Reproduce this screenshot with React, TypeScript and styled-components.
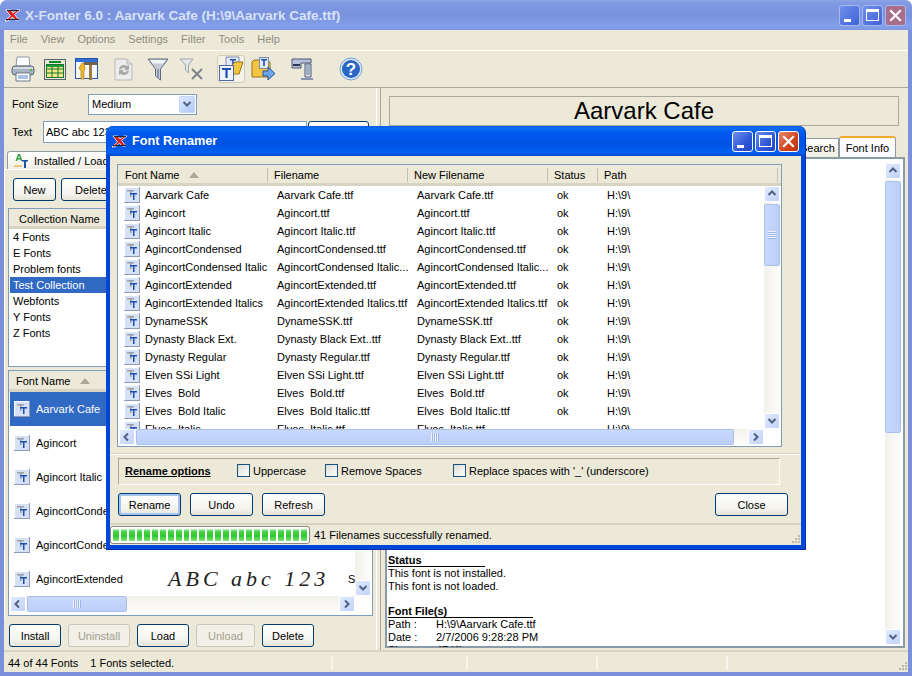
import React from 'react';
import styled, { createGlobalStyle } from 'styled-components';

const GlobalStyle = createGlobalStyle`
  html, body { margin: 0; padding: 0; background: #fff; }
  body { font-family: "Liberation Sans", Arial, sans-serif; font-size: 11px; color: #000; overflow: hidden; }
  * { box-sizing: border-box; }
  svg { flex: none; }
`;

const FILES: [string, string, string?][] = [
  ['Aarvark Cafe', 'Aarvark Cafe.ttf'],
  ['Agincort', 'Agincort.ttf'],
  ['Agincort Italic', 'Agincort Italic.ttf'],
  ['AgincortCondensed', 'AgincortCondensed.ttf'],
  ['AgincortCondensed Italic', 'AgincortCondensed Italic...'],
  ['AgincortExtended', 'AgincortExtended.ttf'],
  ['AgincortExtended Italics', 'AgincortExtended Italics.ttf'],
  ['DynameSSK', 'DynameSSK.ttf'],
  ['Dynasty Black Ext.', 'Dynasty Black Ext..ttf'],
  ['Dynasty Regular', 'Dynasty Regular.ttf'],
  ['Elven SSi Light', 'Elven SSi Light.ttf'],
  ['Elves  Bold', 'Elves  Bold.ttf'],
  ['Elves  Bold Italic', 'Elves  Bold Italic.ttf'],
  ['Elves  Italic', 'Elves  Italic.ttf', '–'],
];

const COLLECTIONS = ['4 Fonts', 'E Fonts', 'Problem fonts', 'Test Collection', 'Webfonts', 'Y Fonts', 'Z Fonts'];
const FONT_ROWS: [string, number][] = [
  ['Aarvark Cafe', 22],
  ['Agincort', 22],
  ['Agincort Italic', 22],
  ['AgincortCondensed', 22],
  ['AgincortCondensed Italic', 13],
  ['AgincortExtended', 22],
];

/* ---------- icons ---------- */

const FontIcon = () => (
  <svg width="16" height="16" viewBox="0 0 16 16">
    <rect x="0" y="0" width="16" height="16" fill="#8e9ab8" />
    <rect x="0" y="0" width="15" height="15" fill="#fff" />
    <rect x="1" y="1" width="14" height="14" fill="#d6e1f6" />
    <path d="M3 3h7v1.500H7.500V10H6V4.500H3z" fill="#9a9ea8" />
    <path d="M6 6h7v1.500h-2.500V13H9V7.500H6z" fill="#1c4fb5" />
  </svg>
);

const AppLogo = () => (
  <svg width="16" height="13" viewBox="0 0 16 13">
    <path d="M1 1h5l2 3 4-3h3L9.500 5.500 14 11h-4L7.500 8 3 12H0l5.500-5z" fill="#d81e1e" stroke="#fff" strokeWidth="0.800" />
    <path d="M1 10.500h13" stroke="#222" strokeWidth="1.200" />
    <path d="M2 1.500h12" stroke="#222" strokeWidth="1" />
  </svg>
);

const Printer = () => (
  <svg width="24" height="26" viewBox="0 0 24 26">
    <path d="M6 1h12l1 9H5z" fill="#fff" stroke="#8f98a8" />
    <rect x="1" y="10" width="22" height="9" rx="3" fill="#a9b2c2" stroke="#5d6778" />
    <rect x="2" y="11" width="20" height="2" fill="#d5dae3" />
    <rect x="19" y="13" width="2" height="2" fill="#3dbb3d" />
    <path d="M5 17h14v8H5z" fill="#fff" stroke="#6b7688" />
    <path d="M7 20h10M7 22h10" stroke="#5b86c8" />
  </svg>
);

const Sheet = () => (
  <svg width="22" height="21" viewBox="0 0 22 21">
    <rect x="0.500" y="0.500" width="21" height="20" fill="#e9e8d8" stroke="#56626e" />
    <rect x="5" y="2" width="12" height="2" fill="#0d8a28" />
    <rect x="2.500" y="5.500" width="17" height="13" fill="#f4e48c" stroke="#137a2b" />
    <path d="M3 10h16M3 14h16M8 6v12M14 6v12" stroke="#137a2b" />
    <rect x="3" y="6" width="16" height="2" fill="#1f9a3a" />
  </svg>
);

const Tools = () => (
  <svg width="24" height="24" viewBox="0 0 24 24">
    <rect x="0.500" y="1.500" width="22" height="20" fill="#f5f8fe" stroke="#2a54a8" />
    <rect x="1" y="2" width="21" height="3" fill="#2f6fd6" />
    <path d="M9 5h13l1 3H9z" fill="#6d6250" />
    <rect x="14" y="8" width="3" height="15" fill="#a07a3c" />
    <path d="M7 6l2 0 1 5-1 3v8H6v-8L4 11z" fill="#f0b92c" stroke="#9a7414" strokeWidth="0.600" />
  </svg>
);

const Refresh = () => (
  <svg width="19" height="23" viewBox="0 0 19 23">
    <path d="M1 1h12l5 5v16H1z" fill="#ececec" stroke="#b9b9b9" />
    <path d="M13 1v5h5" fill="#dcdcdc" stroke="#b9b9b9" />
    <path d="M5 11a5 5 0 0 1 8-3l2-1v5h-5l1.500-1.500A3 3 0 0 0 7 11.500zM15 13a5 5 0 0 1-8 3l-2 1v-5h5l-1.500 1.500a3 3 0 0 0 4.500-.8z" fill="#a8a8a8" />
  </svg>
);

const Funnel = () => (
  <svg width="22" height="23" viewBox="0 0 22 23">
    <path d="M1 1h20l-7.500 10v11l-5-4v-7z" fill="#c7ccd8" stroke="#5f6a80" />
    <path d="M3 2h16l-3 3.500H6z" fill="#f2f4f8" />
    <path d="M11 11v8" stroke="#8d96a8" strokeWidth="2" />
  </svg>
);

const FunnelX = () => (
  <svg width="24" height="22" viewBox="0 0 24 22">
    <path d="M1 1h13l-4.500 6v8l-3-3V7z" fill="#e4e6ea" stroke="#a3a7ae" />
    <path d="M13 11l10 10M23 11L13 21" stroke="#7b7f86" strokeWidth="1.800" />
  </svg>
);

const OpenFonts = () => (
  <svg width="26" height="26" viewBox="0 0 26 26">
    <path d="M8 1h13v14H8z" fill="#e3ebfa" stroke="#7c8cae" />
    <path d="M12 3h6v1.500h-2.200V10h-1.600V4.500H12z" fill="#1d4fb3" />
    <path d="M14 9l3-3h8l-4 12H12z" fill="#f4c542" stroke="#9a7414" />
    <rect x="1.500" y="9.500" width="14" height="15" fill="#eef3fc" stroke="#53689a" />
    <path d="M4 12h9v2h-3.400v8H7.400v-8H4z" fill="#1d4fb3" />
  </svg>
);

const FolderArrow = () => (
  <svg width="24" height="24" viewBox="0 0 24 24">
    <path d="M1 5l2-2h5l2 2h9v15H1z" fill="#f4c542" stroke="#9a7414" />
    <rect x="8.500" y="0.500" width="9" height="11" fill="#e3ebfa" stroke="#7c8cae" />
    <path d="M10 2h6v1.500h-2.200V9h-1.600V3.500H10z" fill="#1d4fb3" />
    <path d="M12 14h5v-4l7 6.500-7 6.500v-4h-5z" fill="#6ea6ec" stroke="#23509c" />
  </svg>
);

const Clamp = () => (
  <svg width="22" height="24" viewBox="0 0 22 24">
    <path d="M1 2h19v4H10v5H1z" fill="#b9c1d8" stroke="#4a5777" />
    <path d="M2 7h7v2H2z" fill="#2d3650" />
    <path d="M14 7h6v13h-6z" fill="#dfe4ef" stroke="#4a5777" />
    <path d="M15 9h4M15 11h4M15 13h4M15 15h4M15 17h4" stroke="#65769c" />
    <path d="M10 21h12v2H10z" fill="#8592b2" />
  </svg>
);

const Help = () => (
  <svg width="24" height="24" viewBox="0 0 24 24">
    <circle cx="12" cy="12" r="11" fill="#dbe6f7" stroke="#7aa0d8" />
    <circle cx="12" cy="12" r="9" fill="#2a66c4" />
    <text x="12" y="18" textAnchor="middle" fontFamily="Liberation Sans, sans-serif" fontWeight="700" fontSize="17" fill="#fff">?</text>
  </svg>
);

const TabIcon = () => (
  <svg width="14" height="14" viewBox="0 0 14 14">
    <path d="M4 0h2l2.500 7H7L6.500 5.500h-3L3 7H1.500zM4 4h2L5 1.500z" fill="#2f9a3a" />
    <path d="M8 6h6v1.500h-2V14h-2V7.500H8z" fill="#1d4fb3" />
    <path d="M0 12h8" stroke="#d8a020" />
  </svg>
);

const Grip = () => (
  <svg width="12" height="12" viewBox="0 0 12 12">
    <path d="M9 2h2v2H9zM6 5h2v2H6zM9 5h2v2H9zM3 8h2v2H3zM6 8h2v2H6zM9 8h2v2H9z" fill="#bdb9a6" />
  </svg>
);

const Chevron = ({ dir }: { dir: 'up' | 'down' | 'left' | 'right' }) => {
  const d = {
    up: 'M1.500 6 L5 2.500 L8.500 6',
    down: 'M1.500 3 L5 6.500 L8.500 3',
    left: 'M6 1.500 L2.500 5 L6 8.500',
    right: 'M3 1.500 L6.500 5 L3 8.500',
  }[dir];
  return (
    <svg width="10" height="10" viewBox="0 0 10 10">
      <path d={d} fill="none" stroke="#4d6185" strokeWidth="2" />
    </svg>
  );
};

/* ---------- window chrome ---------- */

const MainWindow = styled.div`
  position: relative;
  width: 912px;
  height: 676px;
  display: flex;
  flex-direction: column;
  padding: 0 4px 4px;
  background: #7b8fdc;
  border-radius: 7px 7px 0 0;
  overflow: hidden;
`;

const TitleBar = styled.div<{ $active?: boolean }>`
  flex: none;
  height: 30px;
  margin: 0 -4px;
  padding: 0 6px 0 ${(p) => (p.$active ? '6px' : '5px')};
  display: flex;
  align-items: center;
  border-radius: 7px 7px 0 0;
  background: ${(p) =>
    p.$active
      ? 'linear-gradient(180deg,#0a5ae0 0%,#0a6cf5 8%,#0058ee 22%,#0054e3 60%,#0060f0 88%,#0048c8 100%)'
      : 'linear-gradient(180deg,#8ea4e6 0%,#7f99e4 10%,#7a92de 50%,#83a0ea 85%,#7f97e0 100%)'};
  color: ${(p) => (p.$active ? '#fff' : '#d8e2f6')};
  font-size: ${(p) => (p.$active ? '12.700px' : '13.500px')};
  font-weight: 700;
`;

const TitleText = styled.span`
  flex: 1;
  margin-left: 4px;
  white-space: nowrap;
`;

const CaptionButton = styled.div<{ $close?: boolean; $dim?: boolean }>`
  width: 21px;
  height: 21px;
  margin-left: 2px;
  position: relative;
  display: flex;
  align-items: center;
  justify-content: center;
  border: 1px solid ${(p) => (p.$dim ? '#a8b8ec' : '#fff')};
  border-radius: 3px;
  background: ${(p) => {
    if (p.$close) return p.$dim ? '#a86e8c' : 'linear-gradient(135deg,#e58a6a,#d2431c 60%,#b83312)';
    return p.$dim ? 'linear-gradient(135deg,#6f90ea,#3f62d8)' : 'linear-gradient(135deg,#6f90ea,#2f57d8 60%,#2444c4)';
  }};
`;

const MinGlyph = styled.span`
  position: absolute;
  left: 4px;
  bottom: 3px;
  width: 7px;
  height: 3px;
  background: #fff;
`;

const MaxGlyph = styled.span`
  width: 13px;
  height: 12px;
  border: 1px solid #fff;
  border-top-width: 3px;
`;

const CloseGlyph = () => (
  <svg width="13" height="13" viewBox="0 0 13 13">
    <path d="M2 2l9 9M11 2l-9 9" stroke="#fff" strokeWidth="2.200" strokeLinecap="square" />
  </svg>
);

const Caption = ({ dim }: { dim?: boolean }) => (
  <>
    <CaptionButton $dim={dim}><MinGlyph /></CaptionButton>
    <CaptionButton $dim={dim}><MaxGlyph /></CaptionButton>
    <CaptionButton $dim={dim} $close><CloseGlyph /></CaptionButton>
  </>
);

const MenuBar = styled.div`
  flex: none;
  height: 21px;
  padding: 0 0 2px 6px;
  display: flex;
  align-items: center;
  gap: 13px;
  background: #ece9d8;
  color: #8e8c80;
  border-bottom: 1px solid #fff;
`;

const Toolbar = styled.div`
  flex: none;
  height: 37px;
  display: flex;
  align-items: center;
  background: #ece9d8;
  border-bottom: 1px solid #aca899;
`;

const ToolButton = styled.div<{ $left: number; $pressed?: boolean }>`
  width: 28px;
  height: 28px;
  margin-left: ${(p) => p.$left}px;
  display: flex;
  align-items: center;
  justify-content: center;
  border-radius: 3px;
  border: 1px solid ${(p) => (p.$pressed ? '#d0ccba' : 'transparent')};
  background: ${(p) => (p.$pressed ? '#f4f2e8' : 'transparent')};
`;

const Body = styled.div`
  flex: 1;
  min-height: 0;
  display: flex;
  background: #ece9d8;
`;

const LeftPane = styled.div`
  flex: none;
  width: 372px;
  display: flex;
  flex-direction: column;
`;

const Splitter = styled.div`
  flex: none;
  width: 5px;
  border-left: 1px solid #fff;
  border-right: 1px solid #aca899;
`;

const RightPane = styled.div`
  flex: 1;
  min-width: 0;
  padding: 8px 3px 2px 4px;
  display: flex;
  flex-direction: column;
`;

/* ---------- form bits ---------- */

const FieldRow = styled.div<{ $top: number }>`
  flex: none;
  height: 22px;
  margin-top: ${(p) => p.$top}px;
  padding-left: 8px;
  display: flex;
  align-items: center;
`;

const FieldLabel = styled.label<{ $width: number }>`
  width: ${(p) => p.$width}px;
  flex: none;
`;

const Select = styled.div`
  width: 109px;
  height: 21px;
  padding: 0 1px 0 3px;
  display: flex;
  align-items: center;
  justify-content: space-between;
  background: #fff;
  border: 1px solid #7f9db9;
`;

const SelectArrow = styled.div`
  width: 16px;
  height: 17px;
  display: flex;
  align-items: center;
  justify-content: center;
  border-radius: 2px;
  background: linear-gradient(135deg, #e1eafe, #aec8f7);
  border: 1px solid #c5d5f7;
`;

const TextInput = styled.div`
  width: 264px;
  height: 22px;
  margin-right: 1px;
  padding: 0 2px;
  display: flex;
  align-items: center;
  background: #fff;
  border: 1px solid #7f9db9;
`;

const Button = styled.div<{ $width: number; $disabled?: boolean; $default?: boolean }>`
  flex: none;
  width: ${(p) => p.$width}px;
  height: 23px;
  display: flex;
  align-items: center;
  justify-content: center;
  border: 1px solid ${(p) => (p.$disabled ? '#c9c7ba' : '#003c74')};
  border-radius: 3px;
  color: ${(p) => (p.$disabled ? '#a19f8f' : '#000')};
  background: ${(p) => (p.$disabled ? '#f2f0e6' : 'linear-gradient(180deg,#fff 0%,#f4f3ee 70%,#e6e3d6 100%)')};
  box-shadow: ${(p) => (p.$default ? 'inset 0 0 0 2px #a6c2ee' : 'none')};
`;

const TabStrip = styled.div`
  flex: none;
  height: 18px;
  margin-top: 8px;
  padding-left: 3px;
  display: flex;
`;

const Tab = styled.div`
  width: 180px;
  padding-left: 6px;
  display: flex;
  align-items: center;
  gap: 6px;
  background: linear-gradient(180deg, #fff, #f0eee2);
  border: 1px solid #919b9c;
  border-bottom: none;
  border-radius: 3px 3px 0 0;
`;

const TabPanel = styled.div`
  flex: 1;
  min-height: 0;
  padding: 8px 3px 3px 3px;
  display: flex;
  flex-direction: column;
  border-top: 1px solid #fff;
  border-left: 1px solid #fff;
`;

const ButtonRow = styled.div`
  flex: none;
  display: flex;
  gap: 5px;
  padding-left: 5px;
`;

const BottomButtons = styled(ButtonRow)`
  gap: 7px;
  padding: 5px 0 3px 5px;
`;

const ListFrame = styled.div<{ $height?: number; $top?: number }>`
  position: relative;
  flex: ${(p) => (p.$height ? 'none' : 1)};
  height: ${(p) => (p.$height ? `${p.$height}px` : 'auto')};
  min-height: 0;
  margin-top: ${(p) => p.$top ?? 0}px;
  display: flex;
  flex-direction: column;
  background: #fff;
  border: 1px solid #7f9db9;
  overflow: hidden;
`;

const HeaderRow = styled.div<{ $height: number }>`
  flex: none;
  height: ${(p) => p.$height}px;
  padding-top: 2px;
  display: flex;
  align-items: center;
  background: #ece9d8;
  border-bottom: 3px solid #d8d4c4;
`;

const HeaderCell = styled.div<{ $width: number; $pad?: number }>`
  flex: none;
  width: ${(p) => p.$width}px;
  height: 14px;
  padding-left: ${(p) => p.$pad ?? 6}px;
  display: flex;
  align-items: center;
  gap: 10px;
  border-right: 1px solid #c4c1b0;
`;

const SortArrow = styled.span`
  width: 0;
  height: 0;
  border-left: 5px solid transparent;
  border-right: 5px solid transparent;
  border-bottom: 6px solid #aca899;
`;

const CollectionRows = styled.div`
  padding: 0 0 0 1px;
`;

const CollectionRow = styled.div<{ $selected?: boolean }>`
  height: 16px;
  padding-left: 3px;
  display: flex;
  align-items: center;
  background: ${(p) => (p.$selected ? '#316ac5' : 'transparent')};
  color: ${(p) => (p.$selected ? '#fff' : '#000')};
`;

const FontRows = styled.div`
  flex: 1;
  min-height: 0;
  overflow: hidden;
`;

const FontRowItem = styled.div<{ $selected?: boolean }>`
  height: 34px;
  margin-left: 1px;
  padding-left: 4px;
  display: flex;
  align-items: center;
  white-space: nowrap;
  background: ${(p) => (p.$selected ? '#316ac5' : 'transparent')};
  color: ${(p) => (p.$selected ? '#fff' : '#000')};
`;

const FontRowName = styled.span`
  width: 132px;
  flex: none;
  margin-left: 6px;
  overflow: hidden;
`;

const Preview = styled.span<{ $size: number }>`
  width: 180px;
  flex: none;
  font-family: "Liberation Serif", serif;
  font-style: italic;
  font-size: ${(p) => p.$size}px;
  letter-spacing: 4px;
  color: #222;
`;

/* ---------- scrollbars ---------- */

const VBarWrap = styled.div<{ $top: number; $right: number; $bottom: number }>`
  position: absolute;
  top: ${(p) => p.$top}px;
  right: ${(p) => p.$right}px;
  bottom: ${(p) => p.$bottom}px;
  width: 16px;
  display: flex;
  flex-direction: column;
  gap: 1px;
  background: linear-gradient(90deg, #f3f1ec, #fdfdfa);
`;

const HBar = styled.div<{ $bottom: number }>`
  flex: none;
  height: 16px;
  margin: 0 17px ${(p) => p.$bottom}px 1px;
  display: flex;
  align-items: center;
  gap: 1px;
  background: linear-gradient(180deg, #f3f1ec, #fdfdfa);
`;

const ScrollButton = styled.div`
  flex: none;
  width: 16px;
  height: 16px;
  display: flex;
  align-items: center;
  justify-content: center;
  border: 1px solid #fff;
  border-radius: 2px;
  background: linear-gradient(135deg, #e1eafe, #c1d2fb);
`;

const ThumbV = styled.div<{ $size: number }>`
  flex: none;
  height: ${(p) => p.$size}px;
  margin-top: 1px;
  display: flex;
  align-items: center;
  justify-content: center;
  border: 1px solid #fff;
  outline: 1px solid #a8bfe8;
  outline-offset: -1px;
  border-radius: 2px;
  background: linear-gradient(90deg, #c9d8fc, #bccffa);
`;

const ThumbH = styled.div<{ $size: number }>`
  flex: none;
  width: ${(p) => p.$size}px;
  height: 16px;
  display: flex;
  align-items: center;
  justify-content: center;
  border: 1px solid #fff;
  outline: 1px solid #a8bfe8;
  outline-offset: -1px;
  border-radius: 2px;
  background: linear-gradient(180deg, #c9d8fc, #bccffa);
`;

const GripLinesV = styled.span`
  width: 8px;
  height: 8px;
  background: repeating-linear-gradient(180deg, #eef3ff 0 1px, #9db6e6 1px 2px);
`;

const GripLinesH = styled.span`
  width: 8px;
  height: 8px;
  background: repeating-linear-gradient(90deg, #eef3ff 0 1px, #9db6e6 1px 2px);
`;

const Spacer = styled.div`
  flex: 1;
`;

const VScroll = ({ top, right, bottom, thumb, grip }: { top: number; right: number; bottom: number; thumb: number; grip?: boolean }) => (
  <VBarWrap $top={top} $right={right} $bottom={bottom}>
    <ScrollButton><Chevron dir="up" /></ScrollButton>
    <ThumbV $size={thumb}>{grip && <GripLinesV />}</ThumbV>
    <Spacer />
    <ScrollButton><Chevron dir="down" /></ScrollButton>
  </VBarWrap>
);

const HScroll = ({ thumb, bottom }: { thumb: number; bottom: number }) => (
  <HBar $bottom={bottom}>
    <ScrollButton><Chevron dir="left" /></ScrollButton>
    <ThumbH $size={thumb}><GripLinesH /></ThumbH>
    <Spacer />
    <ScrollButton><Chevron dir="right" /></ScrollButton>
  </HBar>
);

/* ---------- right side ---------- */

const FontTitle = styled.div`
  flex: none;
  height: 30px;
  margin: 0 6px 0 4px;
  display: flex;
  align-items: center;
  justify-content: center;
  border: 1px solid #aca899;
  font-size: 24px;
`;

const RightTabs = styled.div`
  flex: none;
  height: 21px;
  margin-top: 10px;
  padding-right: 9px;
  display: flex;
  justify-content: flex-end;
  align-items: flex-end;
`;

const BackTab = styled.div`
  width: 46px;
  height: 19px;
  padding-left: 6px;
  display: flex;
  align-items: center;
  background: linear-gradient(180deg, #fff, #f0eee2);
  border: 1px solid #919b9c;
  border-bottom: none;
`;

const ActiveTab = styled.div`
  width: 57px;
  height: 21px;
  display: flex;
  align-items: center;
  justify-content: center;
  background: #fcfcfe;
  border: 1px solid #919b9c;
  border-top: 2px solid #f5a92c;
  border-bottom: none;
  border-radius: 3px 3px 0 0;
`;

const InfoPanel = styled.div`
  position: relative;
  flex: 1;
  min-height: 0;
  background: #fff;
  border: 1px solid #919b9c;
  box-shadow: inset 0 0 0 1px #7f9db9;
  overflow: hidden;
  padding: 396px 0 0 2px;
  line-height: 13px;
`;

const InfoHeading = styled.div<{ $width: number; $top?: number }>`
  width: ${(p) => p.$width}px;
  margin-top: ${(p) => p.$top ?? 0}px;
  font-weight: 700;
  border-bottom: 1px solid #000;
  line-height: 12px;
`;

const InfoLine = styled.div`
  white-space: pre;
  display: flex;
`;

const InfoKey = styled.span`
  width: 48px;
`;

/* ---------- status bars ---------- */

const StatusBar = styled.div`
  flex: none;
  height: 22px;
  padding-top: 2px;
  display: flex;
  align-items: center;
  background: #ece9d8;
  border-top: 2px solid #d8d4c4;
`;

const StatusCell = styled.div<{ $width: number; $gap?: number }>`
  flex: none;
  width: ${(p) => p.$width}px;
  height: 14px;
  padding-left: 4px;
  display: flex;
  align-items: center;
  gap: ${(p) => p.$gap ?? 0}px;
  white-space: nowrap;
  border-right: 2px solid #f8f6ec;
`;

const GripCell = styled.div`
  flex: 1;
  height: 100%;
  display: flex;
  align-items: flex-end;
  justify-content: flex-end;
`;

/* ---------- dialog ---------- */

const Dialog = styled.div`
  position: absolute;
  left: 106px;
  top: 126px;
  width: 700px;
  height: 424px;
  display: flex;
  flex-direction: column;
  padding: 0 4px 4px;
  background: #0046d8;
  border-right: 1px solid #0030a8;
  border-bottom: 1px solid #0030a8;
  border-radius: 7px 7px 0 0;
  z-index: 2;
`;

const DialogClient = styled.div`
  flex: 1;
  min-height: 0;
  display: flex;
  flex-direction: column;
  background: #ece9d8;
`;

const RenameList = styled(ListFrame)`
  flex: none;
  height: 283px;
  margin: 8px 19px 0 7px;
`;

const RenameRows = styled.div`
  flex: 1;
  min-height: 0;
  overflow: hidden;
`;

const RenameRow = styled.div`
  height: 18px;
  display: flex;
  align-items: center;
  white-space: pre;
`;

const NameCell = styled.div`
  flex: none;
  width: 150px;
  padding-left: 6px;
  display: flex;
  align-items: center;
  gap: 5px;
`;

const DataCell = styled.div<{ $width: number }>`
  flex: none;
  width: ${(p) => p.$width}px;
  padding-left: 9px;
  overflow: hidden;
`;

const OptionsDivider = styled.div`
  flex: none;
  height: 2px;
  margin-top: 6px;
  border-top: 1px solid #d8d4c4;
  border-bottom: 1px solid #fff;
`;

const OptionsGroup = styled.div`
  flex: none;
  height: 27px;
  margin: 3px 21px 0 8px;
  padding: 0 0 2px 6px;
  display: flex;
  align-items: center;
  border: 1px solid #fff;
  border-left-color: #aca899;
  border-top-color: #aca899;
`;

const OptionsTitle = styled.span`
  width: 112px;
  flex: none;
  font-weight: 700;
  text-decoration: underline;
`;

const CheckOption = styled.label<{ $width: number }>`
  width: ${(p) => p.$width}px;
  flex: none;
  display: flex;
  align-items: center;
  gap: 3px;
  white-space: nowrap;
`;

const CheckBox = styled.span`
  width: 13px;
  height: 13px;
  flex: none;
  border: 1px solid #1c5180;
  background: linear-gradient(135deg, #dcdcd7, #fff);
`;

const DialogActions = styled.div`
  flex: none;
  margin: 8px 13px 0 8px;
  display: flex;
  gap: 9px;
`;

const CloseSlot = styled.div`
  margin-left: auto;
`;

const DialogStatus = styled.div`
  flex: none;
  height: 22px;
  margin-top: auto;
  display: flex;
  align-items: center;
  gap: 4px;
  border-top: 2px solid #d8d4c4;
`;

const Progress = styled.div`
  flex: none;
  width: 200px;
  height: 18px;
  padding: 2px;
  display: flex;
  gap: 2px;
  background: #fff;
  border: 1px solid #8a8878;
  border-radius: 3px;
`;

const ProgressBlock = styled.span`
  flex: 1;
  background: linear-gradient(180deg, #b8eeb8 0%, #3fd13f 25%, #2ecb2e 60%, #7fe27f 100%);
`;

const DialogGrip = styled.div`
  margin-left: auto;
  align-self: flex-end;
  display: flex;
`;

const App: React.FC = () => (
  <>
    <GlobalStyle />
    <MainWindow>
      <TitleBar>
        <AppLogo />
        <TitleText>X-Fonter 6.0 : Aarvark Cafe (H:\9\Aarvark Cafe.ttf)</TitleText>
        <Caption dim />
      </TitleBar>
      <MenuBar>
        {['File', 'View', 'Options', 'Settings', 'Filter', 'Tools', 'Help'].map((m) => (
          <span key={m}>{m}</span>
        ))}
      </MenuBar>
      <Toolbar>
        <ToolButton $left={5}><Printer /></ToolButton>
        <ToolButton $left={4}><Sheet /></ToolButton>
        <ToolButton $left={4}><Tools /></ToolButton>
        <ToolButton $left={8}><Refresh /></ToolButton>
        <ToolButton $left={7}><Funnel /></ToolButton>
        <ToolButton $left={5}><FunnelX /></ToolButton>
        <ToolButton $left={12} $pressed><OpenFonts /></ToolButton>
        <ToolButton $left={4}><FolderArrow /></ToolButton>
        <ToolButton $left={11}><Clamp /></ToolButton>
        <ToolButton $left={21}><Help /></ToolButton>
      </Toolbar>
      <Body>
        <LeftPane>
          <FieldRow $top={5}>
            <FieldLabel $width={76}>Font Size</FieldLabel>
            <Select>
              Medium
              <SelectArrow><Chevron dir="down" /></SelectArrow>
            </Select>
          </FieldRow>
          <FieldRow $top={6}>
            <FieldLabel $width={31}>Text</FieldLabel>
            <TextInput>ABC abc 123</TextInput>
            <Button $width={61} />
          </FieldRow>
          <TabStrip>
            <Tab><TabIcon /> Installed / Loaded</Tab>
          </TabStrip>
          <TabPanel>
            <ButtonRow>
              <Button $width={43}>New</Button>
              <Button $width={60}>Delete</Button>
            </ButtonRow>
            <ListFrame $height={159} $top={7}>
              <HeaderRow $height={20}>
                <HeaderCell $width={200} $pad={10}>Collection Name</HeaderCell>
              </HeaderRow>
              <CollectionRows>
                {COLLECTIONS.map((c) => (
                  <CollectionRow key={c} $selected={c === 'Test Collection'}>{c}</CollectionRow>
                ))}
              </CollectionRows>
            </ListFrame>
            <ListFrame $top={3}>
              <HeaderRow $height={21}>
                <HeaderCell $width={200} $pad={7}>Font Name <SortArrow /></HeaderCell>
              </HeaderRow>
              <FontRows>
                {FONT_ROWS.map(([f, size], i) => (
                  <FontRowItem key={f} $selected={i === 0}>
                    <FontIcon />
                    <FontRowName>{f}</FontRowName>
                    <Preview $size={size}>ABC abc 123</Preview>
                    <span>S</span>
                  </FontRowItem>
                ))}
              </FontRows>
              <HScroll thumb={100} bottom={3} />
              <VScroll top={21} right={1} bottom={19} thumb={80} />
            </ListFrame>
          </TabPanel>
          <BottomButtons>
            <Button $width={52}>Install</Button>
            <Button $width={62} $disabled>Uninstall</Button>
            <Button $width={52}>Load</Button>
            <Button $width={59} $disabled>Unload</Button>
            <Button $width={52}>Delete</Button>
          </BottomButtons>
        </LeftPane>
        <Splitter />
        <RightPane>
          <FontTitle>Aarvark Cafe</FontTitle>
          <RightTabs>
            <BackTab>Search</BackTab>
            <ActiveTab>Font Info</ActiveTab>
          </RightTabs>
          <InfoPanel>
            <InfoHeading $width={97}>Status</InfoHeading>
            <InfoLine>This font is not installed.</InfoLine>
            <InfoLine>This font is not loaded.</InfoLine>
            <InfoHeading $width={145} $top={12}>Font File(s)</InfoHeading>
            <InfoLine><InfoKey>Path :</InfoKey>H:\9\Aarvark Cafe.ttf</InfoLine>
            <InfoLine><InfoKey>Date :</InfoKey>2/7/2006 9:28:28 PM</InfoLine>
            <InfoLine><InfoKey>Size :</InfoKey>47 Kb</InfoLine>
            <VScroll top={5} right={3} bottom={2} thumb={252} />
          </InfoPanel>
        </RightPane>
      </Body>
      <StatusBar>
        <StatusCell $width={329} $gap={12}>
          <span>44 of 44 Fonts</span>
          <span>1 Fonts selected.</span>
        </StatusCell>
        <StatusCell $width={135} />
        <StatusCell $width={130} />
        <StatusCell $width={130} />
        <GripCell><Grip /></GripCell>
      </StatusBar>

      <Dialog>
        <TitleBar $active>
          <AppLogo />
          <TitleText>Font Renamer</TitleText>
          <Caption />
        </TitleBar>
        <DialogClient>
          <RenameList>
            <HeaderRow $height={21}>
              <HeaderCell $width={150} $pad={7}>Font Name <SortArrow /></HeaderCell>
              <HeaderCell $width={140}>Filename</HeaderCell>
              <HeaderCell $width={140}>New Filename</HeaderCell>
              <HeaderCell $width={50}>Status</HeaderCell>
              <HeaderCell $width={180}>Path</HeaderCell>
            </HeaderRow>
            <RenameRows>
              {FILES.map(([name, file, status]) => (
                <RenameRow key={name}>
                  <NameCell><FontIcon />{name}</NameCell>
                  <DataCell $width={140}>{file}</DataCell>
                  <DataCell $width={140}>{file}</DataCell>
                  <DataCell $width={50}>{status ?? 'ok'}</DataCell>
                  <DataCell $width={100}>H:\9\</DataCell>
                </RenameRow>
              ))}
            </RenameRows>
            <HScroll thumb={598} bottom={1} />
            <VScroll top={21} right={1} bottom={17} thumb={62} grip />
          </RenameList>
          <OptionsDivider />
          <OptionsGroup>
            <OptionsTitle>Rename options</OptionsTitle>
            <CheckOption $width={88}><CheckBox />Uppercase</CheckOption>
            <CheckOption $width={128}><CheckBox />Remove Spaces</CheckOption>
            <CheckOption $width={220}><CheckBox />Replace spaces with '_' (underscore)</CheckOption>
          </OptionsGroup>
          <DialogActions>
            <Button $width={63} $default>Rename</Button>
            <Button $width={63}>Undo</Button>
            <Button $width={63}>Refresh</Button>
            <CloseSlot><Button $width={73}>Close</Button></CloseSlot>
          </DialogActions>
          <DialogStatus>
            <Progress>
              {Array.from({ length: 25 }, (_, i) => <ProgressBlock key={i} />)}
            </Progress>
            <span>41 Filenames successfully renamed.</span>
            <DialogGrip><Grip /></DialogGrip>
          </DialogStatus>
        </DialogClient>
      </Dialog>
    </MainWindow>
  </>
);

export default App;
